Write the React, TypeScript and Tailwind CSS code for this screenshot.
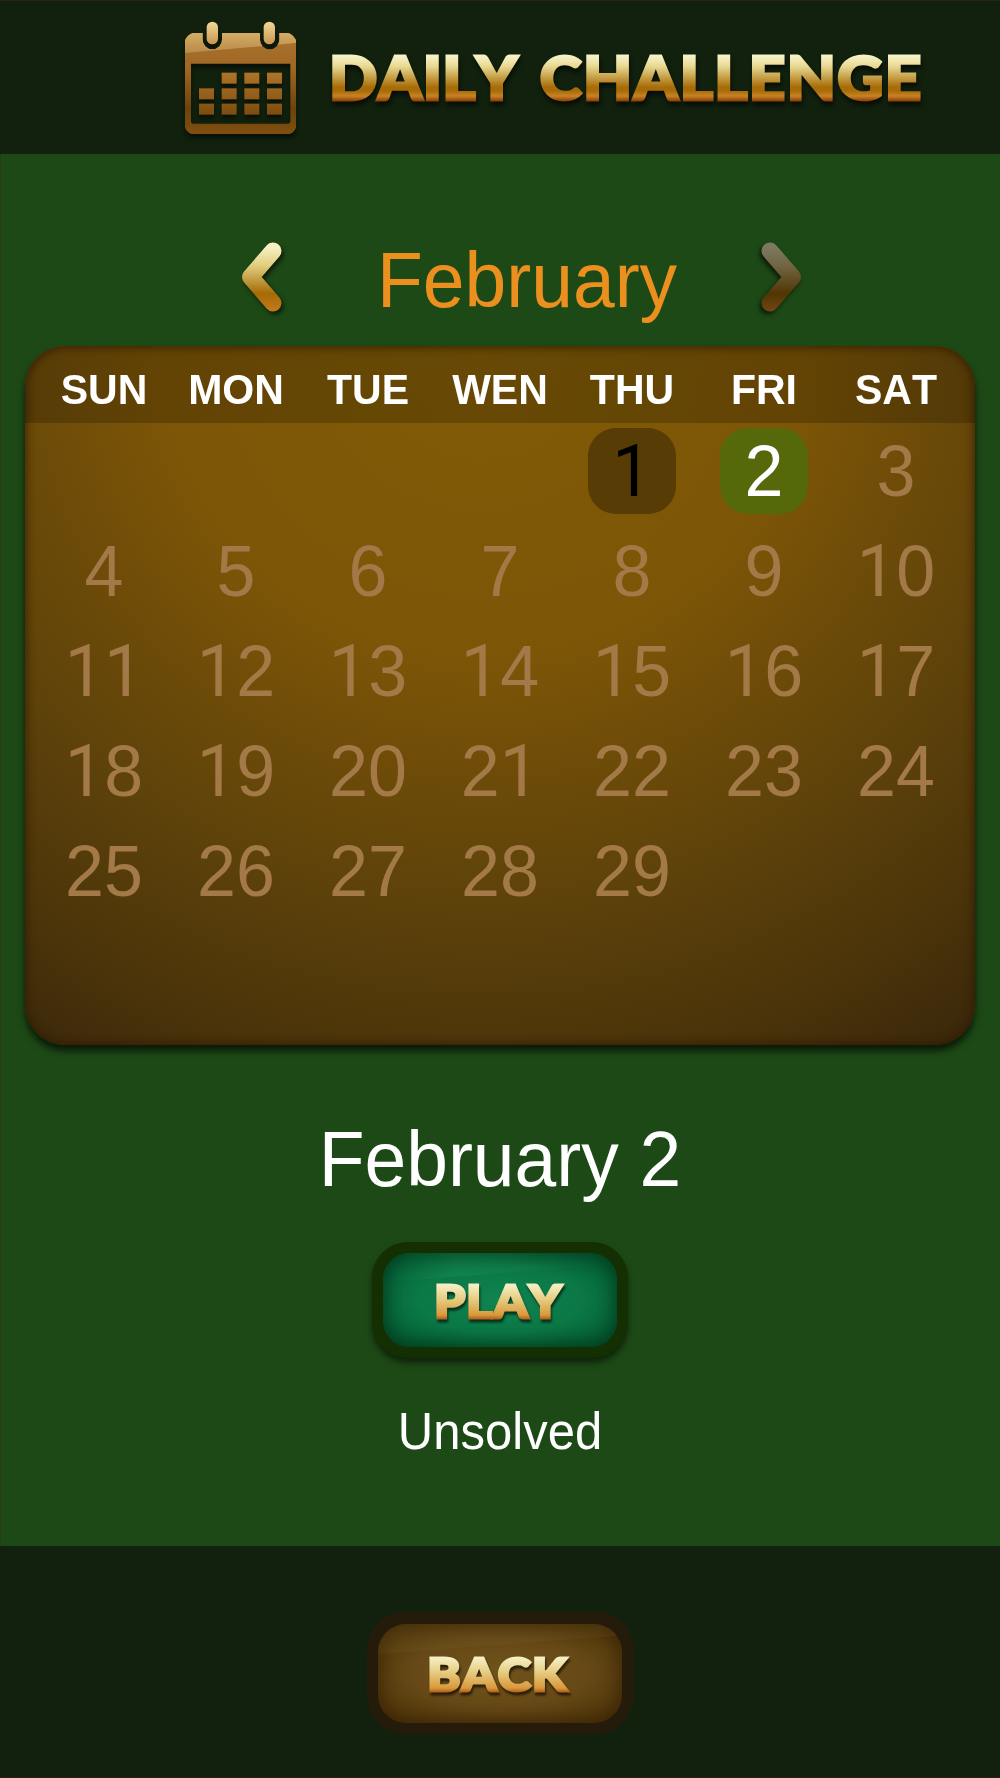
import { useState } from "react";
import { clsx } from "clsx";

const WEEKDAYS = ["SUN", "MON", "TUE", "WEN", "THU", "FRI", "SAT"];
const FIRST_WEEKDAY = 4;
const DAYS_IN_MONTH = 29;
const TODAY = 2;

const ICON_COLS = [116, 184, 252, 320];
const ICON_ROWS = [217, 264, 310];

function CalendarIcon() {
  return (
    <svg
      viewBox="74 62 334 350"
      className="h-[116.67px] w-[111.33px] drop-shadow-[0_4px_2px_rgba(0,0,0,0.5)]"
      aria-hidden
    >
      <defs>
        <linearGradient id="cal-body" x1="0" y1="98" x2="0" y2="402" gradientUnits="userSpaceOnUse">
          <stop offset="0" stopColor="#a97330" />
          <stop offset="0.35" stopColor="#a06724" />
          <stop offset="0.75" stopColor="#6c420c" />
          <stop offset="1" stopColor="#80500f" />
        </linearGradient>
        <linearGradient id="cal-cell" x1="0" y1="217" x2="0" y2="344" gradientUnits="userSpaceOnUse">
          <stop offset="0" stopColor="#ae7428" />
          <stop offset="1" stopColor="#7c4c0e" />
        </linearGradient>
        <linearGradient id="cal-shine" x1="0" y1="98" x2="0" y2="158" gradientUnits="userSpaceOnUse">
          <stop offset="0" stopColor="#d3ad66" />
          <stop offset="1" stopColor="#b98a48" />
        </linearGradient>
        <linearGradient id="cal-ring" x1="0" y1="0" x2="0" y2="1">
          <stop offset="0" stopColor="#f0d997" />
          <stop offset="1" stopColor="#c9954f" />
        </linearGradient>
        <clipPath id="cal-outline">
          <path d="M98 98H127V118A29 29 0 0 0 185 118V98H299V118A29 29 0 0 0 357 118V98H384Q398 102 407 120V382Q402 396 386 402H95Q80 396 74 382V120Q82 102 98 98Z" />
        </clipPath>
      </defs>
      <g clipPath="url(#cal-outline)">
        <path
          fillRule="evenodd"
          fill="url(#cal-body)"
          d="M74 98H408V402H74ZM92 190V362Q92 370 100 370H382Q390 370 390 362V190Z"
        />
        <path d="M74 98H408V128L74 158Z" fill="url(#cal-shine)" />
      </g>
      <rect x="139" y="64" width="34" height="68" rx="17" fill="url(#cal-ring)" />
      <rect x="310" y="64" width="34" height="68" rx="17" fill="url(#cal-ring)" />
      {ICON_ROWS.map((y, row) =>
        ICON_COLS.map((x, col) =>
          row === 0 && col === 0 ? null : (
            <rect key={`${x}-${y}`} x={x} y={y} width="45" height="33" fill="url(#cal-cell)" />
          )
        )
      )}
    </svg>
  );
}

function Chevron({ flipped = false, disabled = false }: { flipped?: boolean; disabled?: boolean }) {
  const id = disabled ? "chevron-dim" : "chevron-gold";
  return (
    <svg
      viewBox="0 0 41 69"
      className={clsx(
        "h-[69px] w-[41px] overflow-visible",
        flipped
          ? "-scale-x-100 drop-shadow-[2px_3px_2px_rgba(0,0,0,0.6)]"
          : "drop-shadow-[2px_3px_2px_rgba(0,0,0,0.6)]"
      )}
      aria-hidden
    >
      <defs>
        <linearGradient id={id} x1="0" y1="0" x2="0" y2="69" gradientUnits="userSpaceOnUse">
          <stop offset="0.08" stopColor={disabled ? "#7d785f" : "#f6f0c2"} />
          <stop offset="0.35" stopColor={disabled ? "#706542" : "#e0cc7c"} />
          <stop offset="0.75" stopColor={disabled ? "#523504" : "#a56a05"} />
          <stop offset="1" stopColor={disabled ? "#704613" : "#c27b1c"} />
        </linearGradient>
      </defs>
      <path
        d="M32 9L9.5 35L32 61"
        fill="none"
        stroke={`url(#${id})`}
        strokeWidth="17"
        strokeLinecap="round"
        strokeLinejoin="round"
      />
    </svg>
  );
}

// The "1" is set without its foot, on the same advance width as the other digits.
function Numeral({ value }: { value: number }) {
  return (
    <span className="inline-block scale-y-[1.04] [font-kerning:none]">
      {String(value)
        .split("")
        .map((digit, i) => (
          <span key={i} className={clsx(digit === "1" && "font-['Roboto',sans-serif]")}>
            {digit}
          </span>
        ))}
    </span>
  );
}

function DayCell({ day, selected, onSelect }: { day: number; selected: boolean; onSelect: () => void }) {
  return (
    <div className="flex h-[100px] justify-center pt-[5px]">
      <button
        type="button"
        disabled={day > TODAY}
        onClick={onSelect}
        className={clsx(
          "h-[86px] w-[88px] rounded-[28px] text-center text-[70px] leading-[86px]",
          selected && "bg-[#55690b] text-white",
          !selected && day <= TODAY && "bg-[#573c05] text-black",
          day > TODAY && "text-[#a27947]"
        )}
      >
        <Numeral value={day} />
      </button>
    </div>
  );
}

export default function App() {
  const [selected, setSelected] = useState(TODAY);
  const days = Array.from({ length: DAYS_IN_MONTH }, (_, i) => i + 1);

  return (
    <div className="flex h-[1778px] w-[1000px] flex-col overflow-hidden bg-[#1d4916] font-['Liberation_Sans',Arial,sans-serif] shadow-[inset_1px_0_#2b3a12]">
      <header className="flex h-[154px] shrink-0 border-t border-[#2b2410] bg-[#11210d] pt-[20px] pl-[184.5px]">
        <CalendarIcon />
        <h1 className="ml-[33px] h-[90px] origin-left scale-x-[1.06] bg-[linear-gradient(to_bottom,#fbf6d2_33px,#e9da93_45px,#a86d08_66px,#a86d08_70px,#c98225_75px,#8a4207_80px)] bg-clip-text pt-[11px] font-['Lato',sans-serif] text-[60px] leading-[90px] font-black tracking-[1.3px] whitespace-nowrap text-transparent drop-shadow-[1px_4px_2px_rgba(0,0,0,0.6)] [-webkit-text-stroke:3px_transparent] [font-kerning:none] [word-spacing:5px]">
          <span className="tracking-[0.3px]">DAILY</span> CHALLENGE
        </h1>
      </header>

      <main className="flex flex-1 flex-col items-center">
        <div className="flex w-full pt-[88px] pl-[241px]">
          <button type="button" aria-label="Previous month" className="h-[69px]">
            <Chevron />
          </button>
          <h2 className="ml-[95px] w-[300px] scale-y-[1.04] text-[75px] leading-[76px] whitespace-nowrap text-[#eb8f1e]">
            February
          </h2>
          <button type="button" aria-label="Next month" disabled className="ml-[84px] h-[69px]">
            <Chevron flipped disabled />
          </button>
        </div>

        <section className="mt-[28px] h-[699px] w-[950px] overflow-hidden rounded-[40px] bg-[radial-gradient(ellipse_90%_118%_at_48%_0%,#825c06_0%,#7c5507_38%,#5f430a_66%,#4b340a_87%,#33230a_107%)] shadow-[0_6px_7px_rgba(0,0,0,0.65)]">
          <div className="h-full rounded-[40px] shadow-[inset_0_0_9px_2px_rgba(45,20,0,0.6)]">
            <div className="grid h-[77px] grid-cols-7 bg-black/20 px-[13px] text-center text-[41px] leading-[86px] font-bold text-white">
              {WEEKDAYS.map((name) => (
                <span key={name} className="scale-y-[1.04] [font-kerning:none]">
                  {name}
                </span>
              ))}
            </div>
            <div className="grid grid-cols-7 px-[13px]">
              {Array.from({ length: FIRST_WEEKDAY }, (_, i) => (
                <div key={`blank-${i}`} />
              ))}
              {days.map((day) => (
                <DayCell
                  key={day}
                  day={day}
                  selected={day === selected}
                  onSelect={() => setSelected(day)}
                />
              ))}
            </div>
          </div>
        </section>

        <p className="mt-[77px] scale-y-[1.04] text-[75px] leading-[75px] text-white">February {selected}</p>

        <button
          type="button"
          className="mt-[45px] h-[116px] w-[256px] rounded-[36px] bg-[#142f02] p-[11px] shadow-[0_5px_6px_rgba(0,0,0,0.5)]"
        >
          <span className="relative flex h-full items-center justify-center overflow-hidden rounded-[26px] bg-[radial-gradient(ellipse_at_center,#0f8350_0%,#0b7846_50%,#056339_78%,#034f2a_110%)] shadow-[inset_0_0_18px_3px_rgba(0,35,15,0.6)]">
            <span className="absolute inset-0 bg-[linear-gradient(to_right,transparent,rgba(60,200,120,0.12)_30%,transparent)] [clip-path:polygon(0_0,100%_0,100%_12%,0_31%)]" />
            <span className="relative -translate-x-[2px] translate-y-[1px] scale-x-[1.1] bg-[linear-gradient(to_bottom,#f6efc4_8px,#e6cd82_22px,#d9993c_38px,#b4601a_42px)] bg-clip-text px-[3px] font-['Lato',sans-serif] text-[45px] leading-[48px] font-black tracking-[1px] text-transparent drop-shadow-[1px_3px_1px_rgba(0,0,0,0.6)] [-webkit-text-stroke:3px_transparent] [font-kerning:none]">
              PLAY
            </span>
          </span>
        </button>

        <p className="mt-[49px] scale-y-[1.04] text-[49px] leading-[49px] text-white">Unsolved</p>
      </main>

      <footer className="flex h-[232px] shrink-0 justify-center border-b border-[#2b2410] bg-[#11210d] pt-[66px]">
        <button type="button" className="h-[122px] w-[267px] rounded-[38px] bg-[#251b0b] p-[11.5px]">
          <span className="relative flex h-full items-center justify-center overflow-hidden rounded-[28px] bg-[radial-gradient(ellipse_at_center,#70521c_0%,#664916_50%,#533a0c_80%,#432b06_110%)] shadow-[inset_0_0_18px_3px_rgba(50,25,0,0.6)]">
            <span className="absolute inset-0 bg-[#908040]/10 [clip-path:polygon(0_0,100%_0,100%_12%,0_31%)]" />
            <span className="relative -translate-x-[2px] translate-y-[1px] scale-x-[1.09] bg-[linear-gradient(to_bottom,#f6efc4_8px,#e6cd82_22px,#d9993c_38px,#b4601a_42px)] bg-clip-text px-[3px] font-['Lato',sans-serif] text-[46px] leading-[48px] font-black tracking-[1px] text-transparent drop-shadow-[1px_3px_1px_rgba(0,0,0,0.6)] [-webkit-text-stroke:3px_transparent] [font-kerning:none]">
              BACK
            </span>
          </span>
        </button>
      </footer>
    </div>
  );
}
